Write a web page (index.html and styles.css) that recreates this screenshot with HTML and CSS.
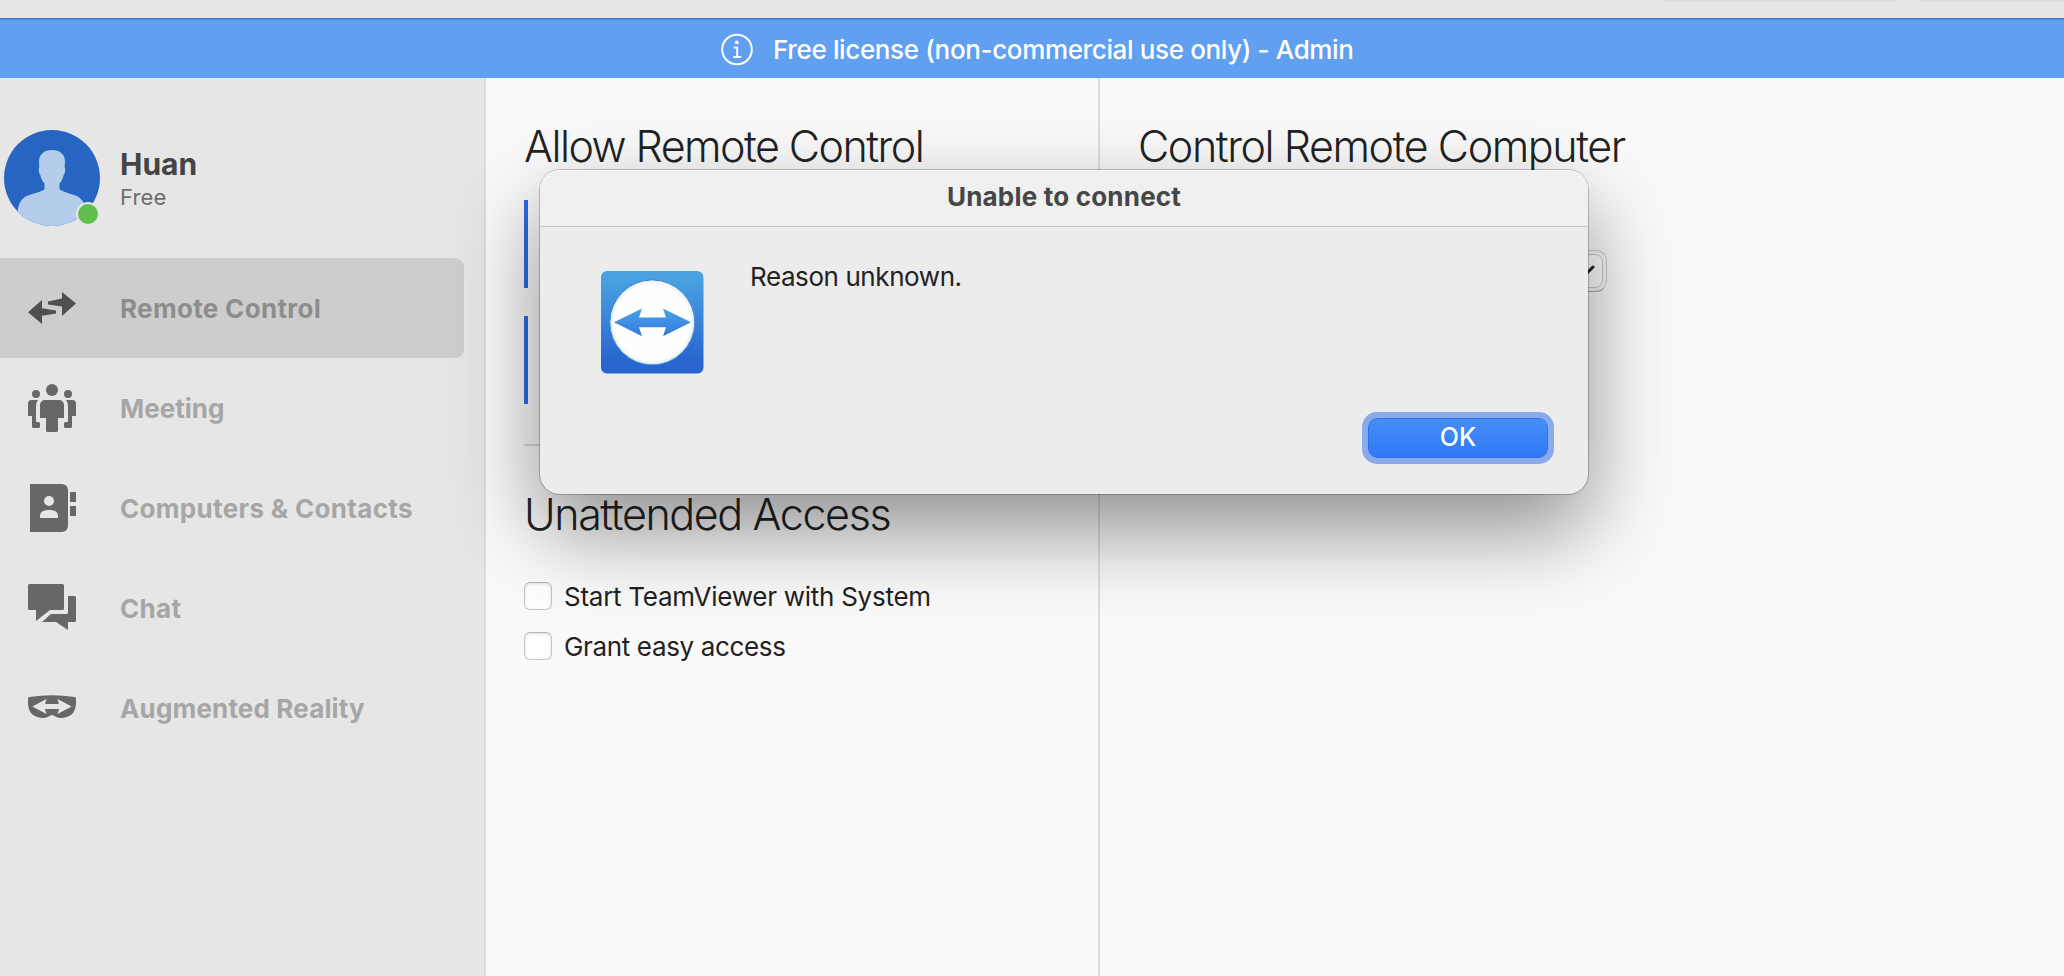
FILE: index.html
```html
<!DOCTYPE html>
<html lang="en">
<head>
<meta charset="utf-8">
<title>Remote Control</title>
<link rel="stylesheet" href="styles.css">
</head>
<body>
<div class="window">
  <div class="toolbar"><span class="tool tool-a"></span><span class="tool tool-b"></span></div>
  <div class="banner">
    <svg class="info" width="34" height="34" viewBox="0 0 34 34" fill="none" stroke="#fff"><circle cx="17" cy="16.5" r="14.8" stroke-width="2"/><path d="M13.8 14.6h3.4v9.2M13.2 24h8" stroke-width="1.900"/><circle cx="16.8" cy="9.4" r="1.900" fill="#fff" stroke="none"/></svg>
    <span class="banner-text">Free license (non-commercial use only) - Admin</span>
  </div>
  <div class="content">
    <aside class="sidebar">
      <div class="profile">
        <div class="avatar">
          <svg width="96" height="96" viewBox="0 0 96 96"><defs><clipPath id="disc"><circle cx="48" cy="48" r="48"/></clipPath></defs><circle cx="48" cy="48" r="48" fill="#2765c2"/><path clip-path="url(#disc)" fill="#b4cdeb" d="M48 20c8 0 13 4.500 13 11.500l-.4 5.500c1 .4.900 6-.9 8-.8 3.500-2.200 6.200-4.200 8.500V59.500c5 3 9 3.600 14 5.200C77 66.500 82.500 74 82.500 84v14H13.500V84c0-11 5-17.500 12.500-19.300 6-1.600 9-2.400 14.500-5.200V53.500c-2-2.300-3.400-5-4.200-8.500-1.800-2-1.900-7.600-.9-8L35 31.500C35 24.500 40 20 48 20z"/></svg>
          <span class="status"></span>
        </div>
        <div class="who"><div class="name">Huan</div><div class="plan">Free</div></div>
      </div>
      <nav class="nav">
        <div class="item active"><svg class="icon" viewBox="0 0 48 48" fill="#505050"><path d="M0 28.200 14 16v8.200l14 2.400v2.800l-14 2.400V40zM48 19.600 34 8v6.600l-14 2.800v3l14 2V32z"/></svg><span>Remote Control</span></div>
        <div class="item"><svg class="icon" viewBox="0 0 48 48" fill="#676767"><circle cx="24" cy="6" r="6"/><circle cx="8" cy="10" r="4"/><circle cx="40" cy="10" r="4"/><path d="M17 16h14a5 5 0 0 1 5 5v13h-6v12.500q0 1.500-1.500 1.500h-9q-1.500 0-1.500-1.500V34h-6V21a5 5 0 0 1 5-5zM3.500 16H10q-2 3-2 6v16h2.500q1.500 0 1.500 1.500v3q0 1.500-1.500 1.500h-5Q4 44 4 42.500V32H0V19.500Q0 16 3.500 16zM44.500 16H38q2 3 2 6v16h-2.500Q36 38 36 39.500v3q0 1.500 1.500 1.500h5q1.500 0 1.500-1.500V32h4V19.500Q48 16 44.500 16z"/></svg><span class="plain">Meeting</span></div>
        <div class="item"><svg class="icon" viewBox="0 0 48 48" fill="#676767"><path fill-rule="evenodd" d="M2 0h32a6 6 0 0 1 6 6v36a6 6 0 0 1-6 6H2zM21 12a5 5 0 1 0 0 10 5 5 0 0 0 0-10zM12 34h18v-2c0-4-3-6-9-6s-9 2-9 6zM42 8h6v10h-6zM42 22h6v10h-6z"/></svg><span>Computers &amp; Contacts</span></div>
        <div class="item"><svg class="icon" viewBox="0 0 48 48" fill="#676767"><path d="M1.500 0h33Q36 0 36 1.500v23q0 1.500-1.500 1.500H22L8 37V26H1.500Q0 26 0 24.500v-23Q0 0 1.500 0zM40 12h6.500q1.500 0 1.500 1.500v23q0 1.500-1.500 1.500H40v8l-12-8H14l9-8h15.500q1.500 0 1.500-1.500z"/></svg><span>Chat</span></div>
        <div class="item"><svg class="icon" viewBox="0 0 48 48"><path fill="#676767" d="M0 14.500Q0 13.300 1.500 13 24 9.500 46.500 13q1.500.3 1.500 1.500v4.800C48 29.500 41 34 33 34c-4.500 0-6-2.800-9-2.800S19.500 34 15 34C7 34 0 29.500 0 19.300z"/><path fill="#e6e6e6" d="M4.300 22.400 18.500 15 17 20h14l-1.500-5 14.200 7.400-14.200 7.600L31 25H17l1.500 5z"/></svg><span class="tight">Augmented Reality</span></div>
      </nav>
    </aside>
    <main class="main">
      <section class="panel allow">
        <h1 class="h-allow">Allow Remote Control</h1>
        <div class="field"></div>
        <div class="field"></div>
        <div class="rule"></div>
        <h1 class="h-un">Unattended Access</h1>
        <label class="check"><span class="box"></span><span>Start TeamViewer with System</span></label>
        <label class="check"><span class="box"></span><span>Grant easy access</span></label>
      </section>
      <section class="panel control">
        <h1 class="h-con">Control Remote Computer</h1>
        <div class="combo"><div class="combo-button"><svg width="20" height="12" viewBox="0 0 20 12" fill="none" stroke="#222" stroke-width="3" stroke-linecap="round" stroke-linejoin="round"><path d="M3 2l7 7 7-7"/></svg></div></div>
      </section>
    </main>
  </div>
  <div class="dialog">
    <div class="dialog-title">Unable to connect</div>
    <div class="dialog-body">
      <svg class="logo" width="103" height="103" viewBox="0 0 103 103"><defs><linearGradient id="bg" x1="0" y1="0" x2="0" y2="1"><stop offset="0" stop-color="#4ba3e2"/><stop offset=".12" stop-color="#489fe1"/><stop offset=".85" stop-color="#2967cf"/><stop offset="1" stop-color="#2865ce"/></linearGradient><linearGradient id="ar" x1="0" y1="0" x2="0" y2="1"><stop offset="0" stop-color="#4aa2e9"/><stop offset="1" stop-color="#3579dd"/></linearGradient><linearGradient id="rim" x1="0" y1="0" x2="0" y2="1"><stop offset="0" stop-color="#2f7bd3"/><stop offset="1" stop-color="#54a2e6"/></linearGradient><radialGradient id="wh"><stop offset=".88" stop-color="#fff" stop-opacity="0"/><stop offset="1" stop-color="#e3e6e8"/></radialGradient></defs><rect width="102.500" height="102.500" rx="6" fill="url(#bg)"/><circle cx="51.300" cy="51.300" r="42.300" fill="#fdfefe" stroke="url(#rim)"/><circle cx="51.300" cy="51.300" r="41.800" fill="url(#wh)"/><path fill="url(#ar)" d="M13 51.300 41 37.500l-3 9h27l-3-9 28 13.800-28 14 3-9H38l3 9z"/></svg>
      <p class="message">Reason unknown.</p>
    </div>
    <button class="ok">OK</button>
  </div>
</div>
</body>
</html>
```
FILE: styles.css
```css
* { box-sizing: border-box; }
body { margin: 0; font-family: Inter, "Liberation Sans", sans-serif; color: #222; }
.window { position: relative; width: 2064px; height: 976px; overflow: hidden; background: #fafafa; display: flex; flex-direction: column; }
.toolbar { height: 18px; flex: none; background: #e6e6e6; display: flex; gap: 24px; padding-left: 1664px; }
.tool { height: 2px; background: #dadada; border-radius: 0 0 4px 4px; }
.tool-a { width: 232px; }
.tool-b { width: 144px; border-radius: 0 0 0 4px; }
.banner { height: 60px; flex: none; background: #619ff0; border-top: 1px solid #3a76c8; box-shadow: inset 0 1px #5490e3; display: flex; padding: 14px 0 0 720px; color: #fff; font-size: 26px; line-height: 34px; font-weight: 500; letter-spacing: -.36px; }
.info { flex: none; }
.banner-text { padding-left: 19px; white-space: nowrap; }
.content { flex: 1; display: flex; }
.sidebar { width: 486px; flex: none; background: #e6e6e6; border-right: 2px solid #dcdcdc; }
.profile { display: flex; height: 180px; padding: 52px 0 0 4px; }
.avatar { position: relative; width: 96px; height: 96px; }
.avatar svg { display: block; }
.status { position: absolute; left: 72px; top: 72px; width: 24px; height: 24px; border-radius: 50%; background: #5fbf4e; border: 2px solid #e6e6e6; }
.who { padding: 16px 0 0 20px; }
.name { font-size: 30px; font-weight: 700; line-height: 36px; color: #444; }
.plan { font-size: 22px; line-height: 30px; letter-spacing: .1px; color: #6e6e70; }
.item { display: flex; width: 464px; height: 100px; align-items: flex-start; padding: 26px 0 0 28px; color: #a6a6a6; font-size: 26px; font-weight: 700; line-height: 50px; letter-spacing: .32px; }
.item span { white-space: nowrap; padding-left: 44px; }
.item .plain { letter-spacing: 0; }
.item .tight { letter-spacing: .16px; }
.active { background: #cdcdcd; border-radius: 0 9px 9px 0; color: #8d8d8d; }
.icon { width: 48px; height: 48px; flex: none; }
.main { flex: 1; display: flex; }
.panel { padding-left: 38px; }
.allow { width: 614px; border-right: 2px solid #dedede; }
h1 { margin: 0; font-size: 43px; line-height: 54px; font-weight: 345; letter-spacing: -1.55px; white-space: nowrap; padding-top: 41px; }
.field { height: 88px; border-left: 4px solid #2a6de1; margin-top: 28px; }
.h-allow + .field { margin-top: 27px; }
.rule { height: 2px; background: #d8d8d8; margin: 40px 38px 0 0; }
.h-un { padding-top: 41px; letter-spacing: -1.4px; }
.h-con { letter-spacing: -1.44px; }
.check { display: flex; height: 50px; font-size: 26px; line-height: 30px; letter-spacing: -.26px; white-space: nowrap; }
.check + .check { letter-spacing: -.35px; }
.h-un + .check { margin-top: 41px; }
.box { width: 28px; height: 28px; border-radius: 6px; background: #fff; border: 1px solid #c6c6c6; border-top-color: #b4b4b4; box-shadow: inset 0 1px 3px rgba(0,0,0,.13); margin-right: 12px; }
.combo { display: flex; justify-content: flex-end; width: 469px; height: 42px; margin-top: 77px; border: 1px solid #cdcdcd; border-bottom-color: #aaa; border-radius: 11px; padding: 3px; background: #f8f8f8; }
.combo-button { width: 34px; height: 34px; border: 1px solid #ccc; border-radius: 8px; display: flex; align-items: center; justify-content: center; background: #fff; }
.dialog { position: absolute; left: 540px; top: 170px; width: 1048px; height: 324px; border-radius: 20px; background: #ececec; box-shadow: 0 0 0 1px rgba(0,0,0,.22), 0 36px 86px rgba(0,0,0,.43); display: flex; flex-direction: column; }
.dialog-title { height: 57px; border-bottom: 1px solid #c6c6c6; border-radius: 20px 20px 0 0; background: #f0f0f0; box-shadow: inset 0 1px #fafafa; text-align: center; line-height: 53px; font-size: 26px; font-weight: 700; letter-spacing: .2px; color: #464646; }
.dialog-body { display: flex; padding: 44px 0 0 61px; }
.message { margin: -9px 0 0 46px; font-size: 26px; line-height: 30px; letter-spacing: -.42px; }
.ok { font-family: inherit; align-self: flex-end; margin: 44px 40px 0 0; width: 180px; height: 40px; border: 1px solid #2d70ee; border-radius: 9px; background: linear-gradient(#468ff7, #2f79f5); box-shadow: 0 0 0 6px #8aabeb; color: #fff; font-size: 25px; font-weight: 500; line-height: 34px; padding: 0 0 3px; }
```
